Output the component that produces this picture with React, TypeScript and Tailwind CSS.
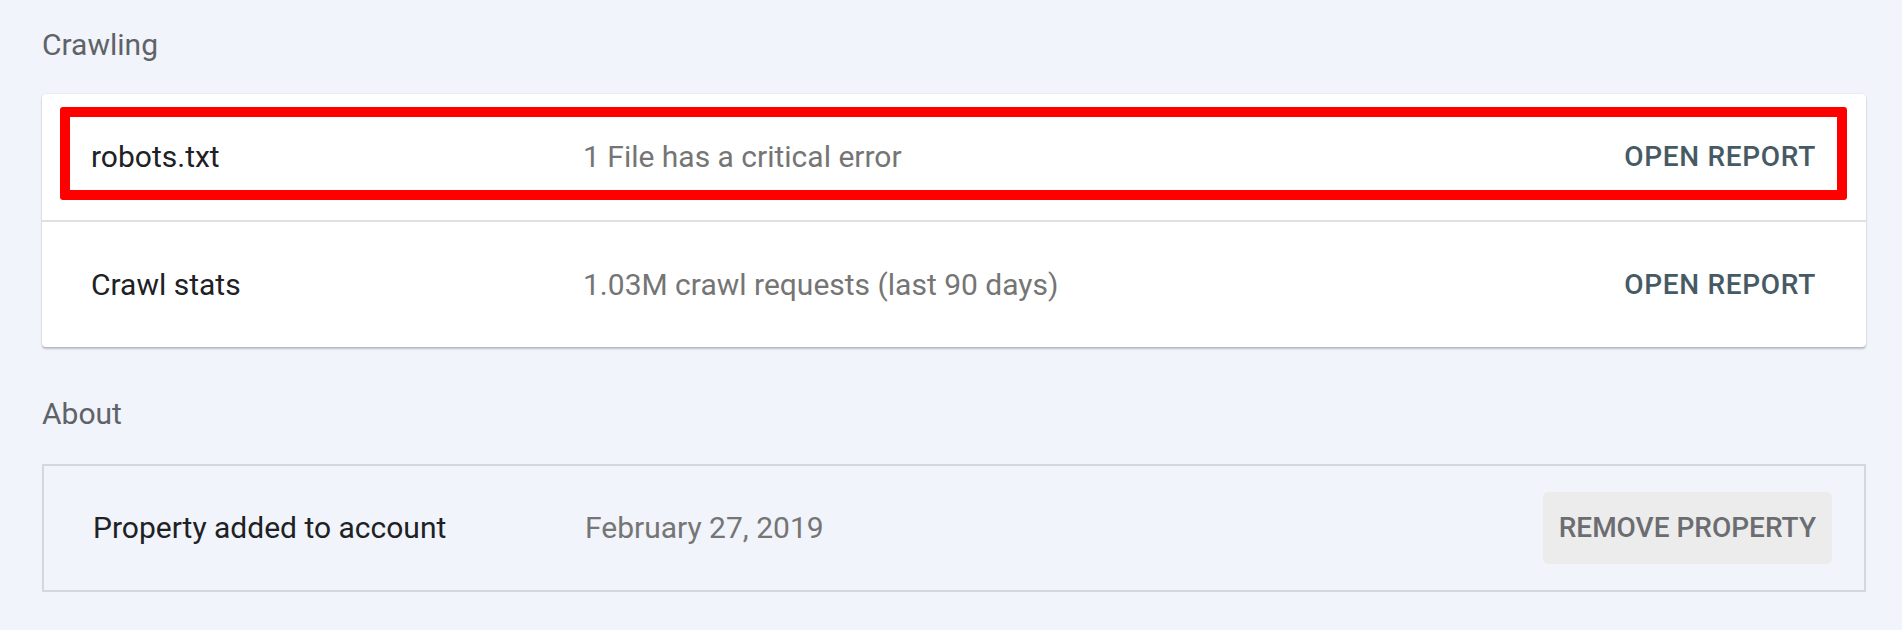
const rows = [
  { title: 'robots.txt', detail: '1 File has a critical error', flagged: true },
  { title: 'Crawl stats', detail: '1.03M crawl requests (last 90 days)', flagged: false },
]

export default function App() {
  return (
    <div className="min-h-[630px] bg-[#f1f4fb] pl-[42px] pr-[36px] pt-[27px] pb-[38px] font-['Roboto','Liberation_Sans',sans-serif] text-[30px] leading-[36px]">
      <h2 className="text-[30px] font-normal text-[#5f6368]">Crawling</h2>

      <div className="mt-[31px] rounded-[4px] bg-white shadow-[0_2px_2px_rgba(0,0,0,0.22),0_0_2px_rgba(0,0,0,0.12)]">
        {rows.map((row, i) => (
          <div
            key={row.title}
            className={
              i === 0
                ? 'relative flex h-[128px] items-center border-b-2 border-[#e0e0e0] pl-[49px] pr-[50px]'
                : 'relative flex h-[125px] items-center pl-[49px] pr-[50px]'
            }
          >
            <div className="w-[492px] text-[#202124]">{row.title}</div>
            <div className="flex-1 text-[#757575]">{row.detail}</div>
            <button className="text-[28px] font-medium tracking-[0.7px] text-[#455a64]">OPEN REPORT</button>
            {/* red highlight drawn over the first row */}
            {row.flagged && (
              <div className="pointer-events-none absolute left-[18px] right-[19px] top-[13px] bottom-[20px] rounded-[3px] border-[10px] border-[#ff0000]" />
            )}
          </div>
        ))}
      </div>

      <h2 className="mt-[49px] text-[30px] font-normal text-[#5f6368]">About</h2>

      <div className="mt-[32px] flex h-[128px] items-center border-2 border-[#d3d8de] pl-[49px] pr-[32px]">
        <div className="w-[492px] text-[#202124]">Property added to account</div>
        <div className="flex-1 text-[#757575]">February 27, 2019</div>
        <button className="h-[72px] rounded-[5px] bg-[#ececec] px-[16px] text-[28px] font-medium text-[#6b6d70]">
          REMOVE PROPERTY
        </button>
      </div>
    </div>
  )
}
